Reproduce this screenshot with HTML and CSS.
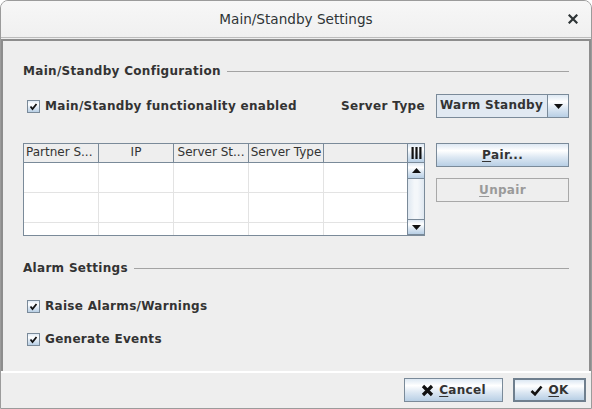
FILE: index.html
```html
<!DOCTYPE html>
<html>
<head>
<meta charset="utf-8">
<link rel="stylesheet" href="styles.css">
</head>
<body>
<div class="window">
  <div class="titlebar">
    <span></span>
    <span class="title">Main/Standby Settings</span>
    <span class="close"><svg width="10" height="10" viewBox="0 0 10 10"><path d="M1.5 1.5 L8.5 8.5 M8.5 1.5 L1.5 8.5" stroke="#2e3436" stroke-width="2.2" stroke-linecap="square"/></svg></span>
  </div>
  <div class="panel">
    <div class="section-head">
      <span class="section-title">Main/Standby Configuration</span>
      <span class="section-line"></span>
    </div>
    <div class="config-row">
      <label class="check">
        <span class="box"><svg width="11" height="11" viewBox="0 0 11 11"><path d="M2.5 5.5 L4.5 8 L8.5 3" fill="none" stroke="#111" stroke-width="1.8"/></svg></span>
        <span>Main/Standby functionality enabled</span>
      </label>
      <div class="server-type">
        <span class="label">Server Type</span>
        <div class="combo">
          <span class="combo-text">Warm Standby</span>
          <span class="combo-btn"><svg width="9" height="5" viewBox="0 0 9 5"><path d="M0 0 H9 L4.5 5 Z" fill="#111"/></svg></span>
        </div>
      </div>
    </div>
    <div class="table-row">
      <div class="table">
        <div class="table-main">
          <div class="thead">
            <div class="th c1">Partner S...</div>
            <div class="th c2">IP</div>
            <div class="th c3">Server St...</div>
            <div class="th c4">Server Type</div>
            <div class="th c5"></div>
          </div>
          <div class="tbody">
            <div class="tr"><div class="td c1"></div><div class="td c2"></div><div class="td c3"></div><div class="td c4"></div><div class="td c5"></div></div>
            <div class="tr"><div class="td c1"></div><div class="td c2"></div><div class="td c3"></div><div class="td c4"></div><div class="td c5"></div></div>
            <div class="tr"><div class="td c1"></div><div class="td c2"></div><div class="td c3"></div><div class="td c4"></div><div class="td c5"></div></div>
          </div>
        </div>
        <div class="scroll-col">
          <div class="corner"><svg width="11" height="12" viewBox="0 0 11 12"><rect x="0.5" y="0" width="2.2" height="12" fill="#111"/><rect x="4.4" y="0" width="2.2" height="12" fill="#111"/><rect x="8.3" y="0" width="2.2" height="12" fill="#111"/></svg></div>
          <div class="scrollbar">
            <div class="sb-btn"><svg width="9" height="5" viewBox="0 0 9 5"><path d="M0 5 H9 L4.5 0 Z" fill="#111"/></svg></div>
            <div class="sb-track"></div>
            <div class="sb-btn"><svg width="9" height="5" viewBox="0 0 9 5"><path d="M0 0 H9 L4.5 5 Z" fill="#111"/></svg></div>
          </div>
        </div>
      </div>
      <div class="side-buttons">
        <button class="btn"><u>P</u>air...</button>
        <button class="btn disabled"><u>U</u>npair</button>
      </div>
    </div>
    <div class="section-head alarm-head">
      <span class="section-title">Alarm Settings</span>
      <span class="section-line"></span>
    </div>
    <label class="check alarm1">
      <span class="box"><svg width="11" height="11" viewBox="0 0 11 11"><path d="M2.5 5.5 L4.5 8 L8.5 3" fill="none" stroke="#111" stroke-width="1.8"/></svg></span>
      <span>Raise Alarms/Warnings</span>
    </label>
    <label class="check alarm2">
      <span class="box"><svg width="11" height="11" viewBox="0 0 11 11"><path d="M2.5 5.5 L4.5 8 L8.5 3" fill="none" stroke="#111" stroke-width="1.8"/></svg></span>
      <span>Generate Events</span>
    </label>
  </div>
  <div class="footer">
    <button class="btn fbtn cancel"><svg width="13" height="13" viewBox="0 0 13 13"><path d="M2 2 L11 11 M11 2 L2 11" stroke="#111" stroke-width="3.2"/></svg><span><u>C</u>ancel</span></button>
    <button class="btn fbtn ok"><svg width="13" height="11" viewBox="0 0 13 11"><path d="M1.5 6 L5 9.3 L11.5 1.5" fill="none" stroke="#111" stroke-width="2.6"/></svg><span><u>O</u>K</span></button>
  </div>
</div>
</body>
</html>
```
FILE: styles.css
```css
* { box-sizing: border-box; }
html, body { margin: 0; padding: 0; background: #ffffff; }
body {
  font-family: "DejaVu Sans", "Liberation Sans", sans-serif;
  font-size: 12px;
  color: #333333;
}
.window {
  width: 592px;
  height: 409px;
  border: 1px solid #9b9b9b;
  border-radius: 8px 8px 0 0;
  overflow: hidden;
  display: flex;
  flex-direction: column;
  background: #eeeeee;
}
.titlebar {
  height: 37px;
  flex: none;
  display: grid;
  grid-template-columns: 1fr auto 1fr;
  align-items: center;
  background: linear-gradient(#f7f7f7, #f0f0f0);
  border-bottom: 1px solid #bcbcbc;
  margin-bottom: 1px;
}
.title {
  font-size: 13.6px;
  color: #2e3436;
}
.close {
  justify-self: end;
  margin-right: 13px;
  display: flex;
}
.panel {
  flex: none;
  height: 332px;
  border: 2px solid #8d8d8d;
  border-bottom: none;
  padding: 22px 20px 0 20px;
  display: flex;
  flex-direction: column;
  background: #eeeeee;
}
.section-head {
  display: flex;
  align-items: center;
  height: 15px;
  font-weight: bold;
  letter-spacing: 0.3px;
}
.section-title { white-space: nowrap; }
.section-line {
  flex: 1;
  height: 1px;
  background: #a3a3a3;
  margin-left: 6px;
  margin-top: 1px;
}
.config-row {
  margin-top: 16px;
  height: 24px;
  display: flex;
  align-items: center;
  justify-content: space-between;
}
.check {
  display: flex;
  align-items: center;
  font-weight: bold;
  letter-spacing: 0.3px;
  padding-left: 4px;
  white-space: nowrap;
}
.box {
  width: 13px;
  height: 13px;
  border: 1px solid #7a8a99;
  background: linear-gradient(#dde8f3 0%, #ffffff 30%, #dde8f3 60%, #b8cfe5 100%);
  display: flex;
  align-items: center;
  justify-content: center;
  margin-right: 5px;
}
.server-type {
  display: flex;
  align-items: center;
}
.label { font-weight: bold; letter-spacing: 0.35px; margin-right: 11px; }
.combo {
  width: 133px;
  height: 24px;
  border: 1px solid #7a8a99;
  display: flex;
}
.combo-text {
  flex: 1;
  background: #e1e9f2;
  font-weight: bold;
  letter-spacing: 0.3px;
  padding-left: 3px;
  display: flex;
  align-items: center;
  padding-bottom: 2px;
}
.combo-btn {
  width: 21px;
  border-left: 1px solid #7a8a99;
  background: linear-gradient(#dde8f3 0%, #ffffff 30%, #dde8f3 60%, #b8cfe5 100%);
  display: flex;
  align-items: center;
  justify-content: center;
}
.table-row {
  margin-top: 25px;
  display: flex;
  justify-content: space-between;
}
.table {
  flex: none;
  width: 402px;
  height: 93px;
  border: 1px solid #7a8a99;
  border-right: none;
  display: flex;
  background: #ffffff;
}
.table-main { flex: 1; display: flex; flex-direction: column; }
.thead {
  height: 19px;
  display: flex;
  background: #eeeeee;
  border-bottom: 1px solid #7a8a99;
}
.th {
  border-right: 1px solid #7a8a99;
  text-align: center;
  line-height: 17px;
  white-space: nowrap;
  overflow: hidden;
  font-size: 12px;
}
.th.c1 { text-align: left; padding-left: 2px; }
.c1, .c2, .c3, .c4 { width: 75px; flex: none; }
.c5 { flex: 1; }
.th.c5 { border-right: none; }
.tbody { flex: 1; overflow: hidden; }
.tr {
  height: 30px;
  display: flex;
  border-bottom: 1px solid #e3e3e3;
}
.td { border-right: 1px solid #e3e3e3; }
.td.c5 { border-right: none; }
.scroll-col {
  width: 18px;
  display: flex;
  flex-direction: column;
  border-left: 1px solid #7a8a99;
  border-right: 1px solid #7a8a99;
}
.corner {
  height: 19px;
  border-bottom: 1px solid #7a8a99;
  background: linear-gradient(#dde8f3 0%, #ffffff 30%, #dde8f3 60%, #b8cfe5 100%);
  display: flex;
  align-items: center;
  justify-content: center;
}
.scrollbar { flex: 1; display: flex; flex-direction: column; background: #eef2f6; }
.sb-btn {
  height: 16px;
  display: flex;
  align-items: center;
  justify-content: center;
  background: linear-gradient(#dde8f3 0%, #ffffff 30%, #dde8f3 60%, #b8cfe5 100%);
  border-top: 1px solid #7a8a99;
  border-bottom: 1px solid #7a8a99;
}
.sb-btn:first-child { border-top: none; }
.sb-track {
  flex: 1;
  background: linear-gradient(90deg, #dfe8f1, #f4f7fa 40%, #f4f7fa 60%, #dfe8f1);
}
.side-buttons {
  flex: none;
  width: 133px;
  display: flex;
  flex-direction: column;
  gap: 11px;
}
.btn {
  font-family: "DejaVu Sans", "Liberation Sans", sans-serif;
  font-size: 12px;
  font-weight: bold;
  letter-spacing: 0.3px;
  color: #333333;
  height: 24px;
  border: 1px solid #7a8a99;
  background: linear-gradient(#dde8f3 0%, #ffffff 30%, #dde8f3 60%, #b8cfe5 100%);
  padding: 0;
  margin: 0;
  display: flex;
  align-items: center;
  justify-content: center;
}
.btn u { text-decoration-thickness: 1px; text-underline-offset: 2px; }
.btn.disabled {
  background: #eeeeee;
  border-color: #a8a8a8;
  color: #9a9a9a;
}
.alarm-head { margin-top: 24px; }
.check.alarm1 { margin-top: 21px; height: 20px; }
.check.alarm2 { margin-top: 13px; height: 20px; }
.footer {
  flex: 1;
  border-top: 2px solid #ffffff;
  display: flex;
  justify-content: flex-end;
  align-items: flex-start;
  padding: 5px 5px 0 0;
  gap: 10px;
}
.fbtn { gap: 5px; }
.fbtn.cancel { width: 99px; }
.fbtn.ok { width: 73px; border: 2px solid #6f7f8e; }
```
